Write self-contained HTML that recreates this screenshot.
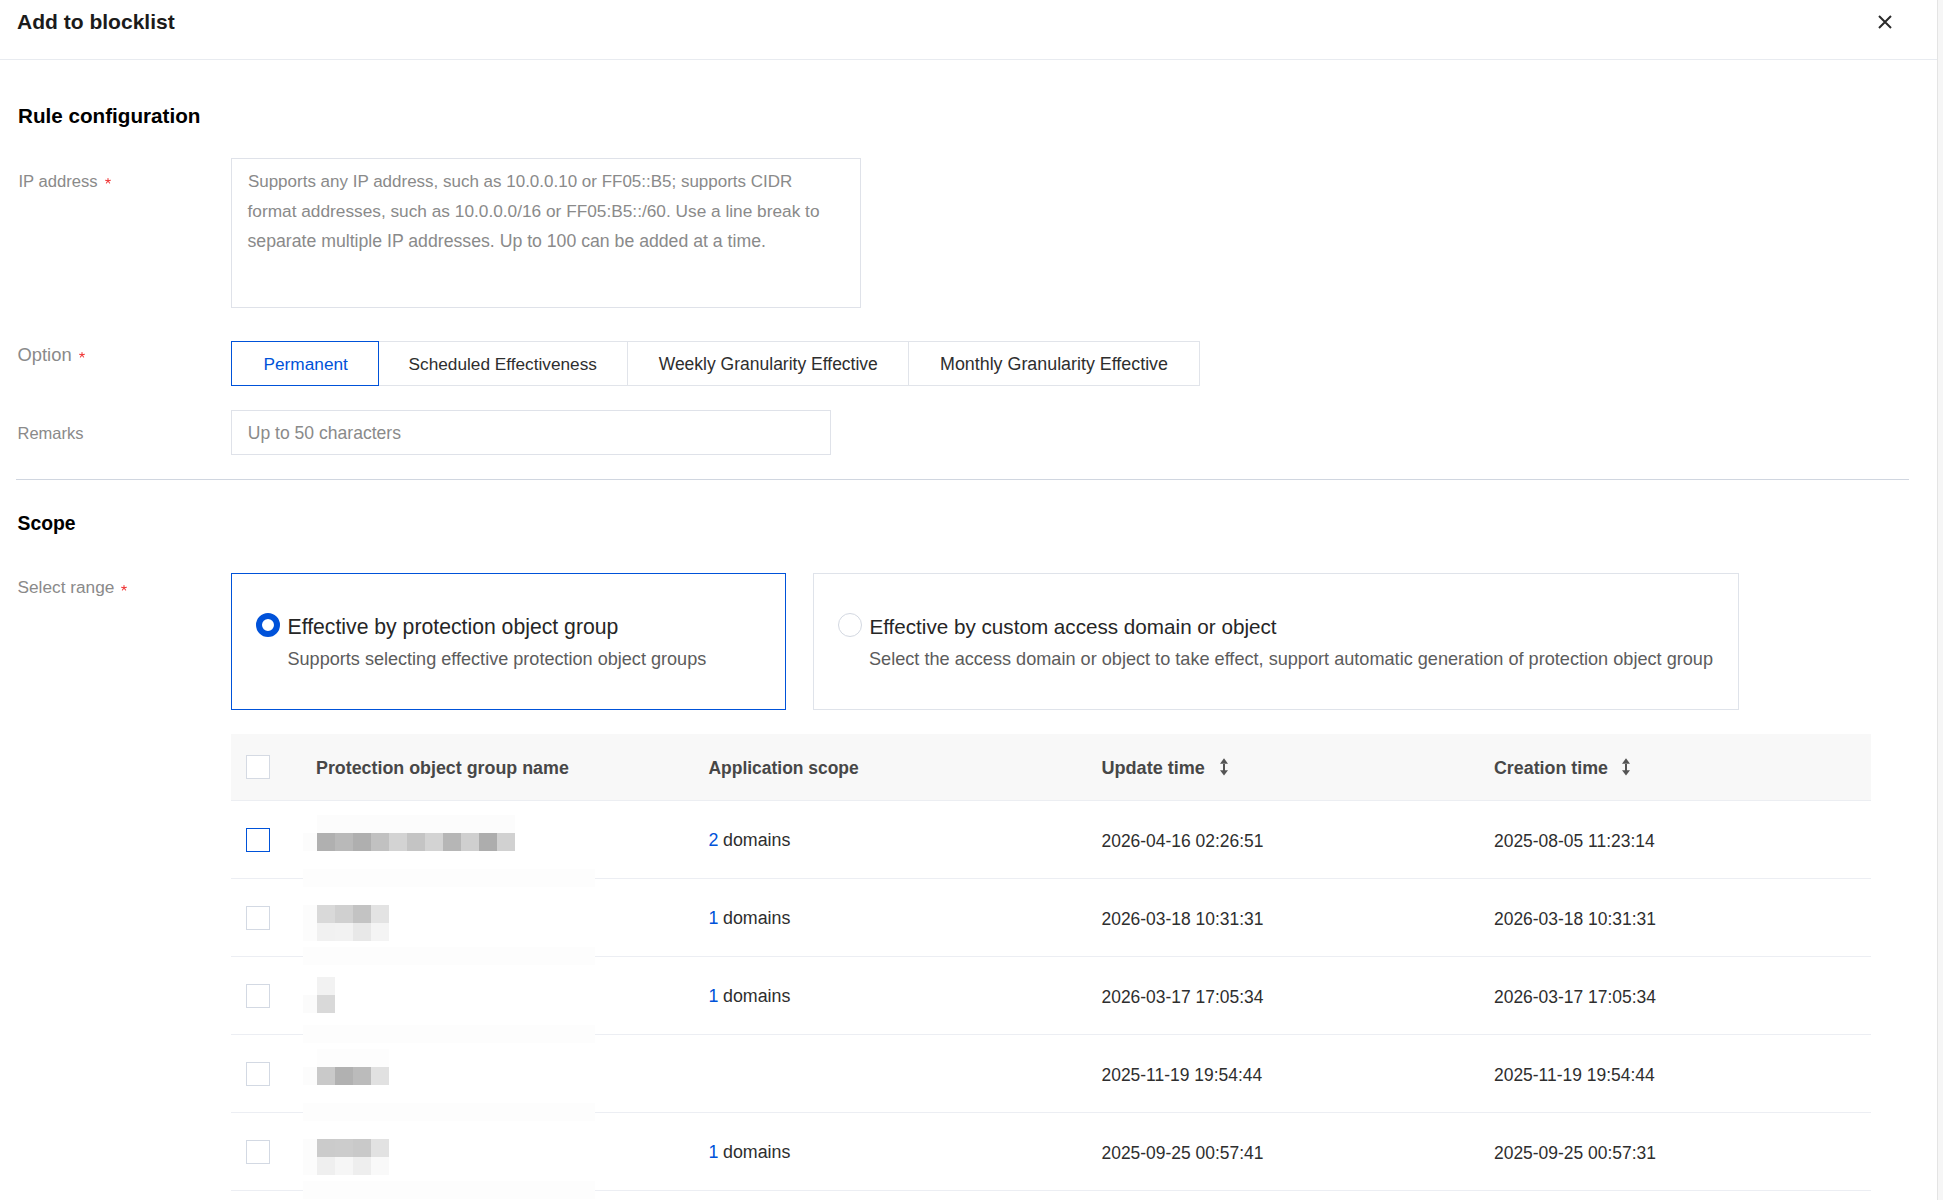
<!DOCTYPE html>
<html><head><meta charset="utf-8">
<style>
html,body{margin:0;padding:0;width:1943px;height:1200px;overflow:hidden;background:#fff;}
body{position:relative;font-family:"Liberation Sans",sans-serif;}
.a{position:absolute;box-sizing:border-box;}
.t{position:absolute;white-space:nowrap;line-height:1;}
.b{font-weight:bold;}
.m{display:inline-block;width:0;height:0;vertical-align:baseline;}
</style></head><body>

<svg class="a" style="left:1870px;top:8px" width="30" height="28" viewBox="1870 8 30 28"><path d="M1879 16 L1891 28 M1891 16 L1879 28" stroke="#2b2b2b" stroke-width="2" fill="none"/></svg>
<div class="a" style="left:0px;top:59px;width:1937px;height:1px;background:#e8ebf0"></div>
<div class="a" style="left:1937px;top:0px;width:6px;height:1200px;background:#f6f6f6;border-left:1px solid #e4e4e4"></div>
<div class="a" style="left:231px;top:158px;width:630px;height:150px;border:1px solid #dfe2e9"></div>
<div class="a" style="left:231px;top:341px;width:969px;height:45px;border:1px solid #e1e4ea"></div>
<div class="a" style="left:627px;top:341px;width:1px;height:45px;background:#e1e4ea"></div>
<div class="a" style="left:908px;top:341px;width:1px;height:45px;background:#e1e4ea"></div>
<div class="a" style="left:231px;top:341px;width:148px;height:45px;border:1px solid #0052d9"></div>
<div class="a" style="left:231px;top:410px;width:600px;height:45px;border:1px solid #dfe2e9"></div>
<div class="a" style="left:16px;top:479px;width:1893px;height:1px;background:#d0d6e0"></div>
<div class="a" style="left:231px;top:573px;width:555px;height:137px;border:1px solid #0052d9"></div>
<div class="a" style="left:256px;top:613px;width:24px;height:24px;border:6px solid #0052d9;border-radius:50%"></div>
<div class="a" style="left:813px;top:573px;width:926px;height:137px;border:1px solid #dfe3ea"></div>
<div class="a" style="left:838px;top:613px;width:24px;height:24px;border:1px solid #d3d8e1;border-radius:50%"></div>
<svg class="a" style="left:102.7px;top:176.4px" width="10" height="10" viewBox="-5 -5 10 10"><path d="M0 0 L0 -2.5 M0 0 L-2.4 -0.8 M0 0 L2.4 -0.8 M0 0 L-1.6 2.0 M0 0 L1.6 2.0" stroke="#f03c3c" stroke-width="1.1" stroke-linecap="round" fill="none"/></svg>
<svg class="a" style="left:77.1px;top:350.1px" width="10" height="10" viewBox="-5 -5 10 10"><path d="M0 0 L0 -2.5 M0 0 L-2.4 -0.8 M0 0 L2.4 -0.8 M0 0 L-1.6 2.0 M0 0 L1.6 2.0" stroke="#f03c3c" stroke-width="1.1" stroke-linecap="round" fill="none"/></svg>
<svg class="a" style="left:119.4px;top:582.5px" width="10" height="10" viewBox="-5 -5 10 10"><path d="M0 0 L0 -2.5 M0 0 L-2.4 -0.8 M0 0 L2.4 -0.8 M0 0 L-1.6 2.0 M0 0 L1.6 2.0" stroke="#f03c3c" stroke-width="1.1" stroke-linecap="round" fill="none"/></svg>
<div class="a" style="left:231px;top:734px;width:1640px;height:66px;background:#f8f8f8"></div>
<div class="a" style="left:231px;top:800px;width:1640px;height:1px;background:#eceef2"></div>
<div class="a" style="left:246px;top:755px;width:24px;height:24px;border:1px solid #d5dae3;background:#fff"></div>
<svg class="a" style="left:1219px;top:757px" width="10" height="20" viewBox="0 0 10 20"><path d="M5 1.2 L1 6.8 L9 6.8 Z M4 6.5 H6 V13.5 H4 Z M1 13.2 L9 13.2 L5 18.6 Z" fill="#555"/></svg>
<svg class="a" style="left:1621px;top:757px" width="10" height="20" viewBox="0 0 10 20"><path d="M5 1.2 L1 6.8 L9 6.8 Z M4 6.5 H6 V13.5 H4 Z M1 13.2 L9 13.2 L5 18.6 Z" fill="#555"/></svg>
<div class="a" style="left:231px;top:878px;width:1640px;height:1px;background:#eceef3"></div>
<div class="a" style="left:246px;top:828px;width:24px;height:24px;border:1px solid #0052d9;background:#fff"></div>
<div class="a" style="left:303px;top:869px;width:292px;height:18px;background:#fdfdfd"></div>
<div class="a" style="left:231px;top:956px;width:1640px;height:1px;background:#eceef3"></div>
<div class="a" style="left:246px;top:906px;width:24px;height:24px;border:1px solid #d3d9e3;background:#fff"></div>
<div class="a" style="left:303px;top:947px;width:292px;height:18px;background:#fdfdfd"></div>
<div class="a" style="left:231px;top:1034px;width:1640px;height:1px;background:#eceef3"></div>
<div class="a" style="left:246px;top:984px;width:24px;height:24px;border:1px solid #d3d9e3;background:#fff"></div>
<div class="a" style="left:303px;top:1025px;width:292px;height:18px;background:#fdfdfd"></div>
<div class="a" style="left:231px;top:1112px;width:1640px;height:1px;background:#eceef3"></div>
<div class="a" style="left:246px;top:1062px;width:24px;height:24px;border:1px solid #d3d9e3;background:#fff"></div>
<div class="a" style="left:303px;top:1103px;width:292px;height:18px;background:#fdfdfd"></div>
<div class="a" style="left:231px;top:1190px;width:1640px;height:1px;background:#eceef3"></div>
<div class="a" style="left:246px;top:1140px;width:24px;height:24px;border:1px solid #d3d9e3;background:#fff"></div>
<div class="a" style="left:303px;top:1181px;width:292px;height:18px;background:#fdfdfd"></div>
<div class="a" style="left:317px;top:815px;width:198px;height:18px;background:#fcfcfc"></div>
<div class="a" style="left:303px;top:833px;width:14px;height:18px;background:#fcfcfc"></div>
<div class="a" style="left:303px;top:905px;width:14px;height:36px;background:#fcfcfc"></div>
<div class="a" style="left:303px;top:995px;width:14px;height:18px;background:#fbfbfb"></div>
<div class="a" style="left:317px;top:1049px;width:72px;height:18px;background:#fdfdfd"></div>
<div class="a" style="left:303px;top:1067px;width:14px;height:18px;background:#fcfcfc"></div>
<div class="a" style="left:303px;top:1139px;width:14px;height:36px;background:#fcfcfc"></div>
<div class="a" style="left:317px;top:833px;width:18px;height:18px;background:#b0b0b0"></div>
<div class="a" style="left:335px;top:833px;width:18px;height:18px;background:#b9b9b9"></div>
<div class="a" style="left:353px;top:833px;width:18px;height:18px;background:#afafaf"></div>
<div class="a" style="left:371px;top:833px;width:18px;height:18px;background:#c1c1c1"></div>
<div class="a" style="left:389px;top:833px;width:18px;height:18px;background:#d3d3d3"></div>
<div class="a" style="left:407px;top:833px;width:18px;height:18px;background:#c4c4c4"></div>
<div class="a" style="left:425px;top:833px;width:18px;height:18px;background:#d3d3d3"></div>
<div class="a" style="left:443px;top:833px;width:18px;height:18px;background:#b6b6b6"></div>
<div class="a" style="left:461px;top:833px;width:18px;height:18px;background:#cfcfcf"></div>
<div class="a" style="left:479px;top:833px;width:18px;height:18px;background:#adadad"></div>
<div class="a" style="left:497px;top:833px;width:18px;height:18px;background:#d1d1d1"></div>
<div class="a" style="left:317px;top:905px;width:18px;height:18px;background:#d9d9d9"></div>
<div class="a" style="left:335px;top:905px;width:18px;height:18px;background:#d0d0d0"></div>
<div class="a" style="left:353px;top:905px;width:18px;height:18px;background:#c3c3c3"></div>
<div class="a" style="left:371px;top:905px;width:18px;height:18px;background:#e3e3e3"></div>
<div class="a" style="left:317px;top:923px;width:18px;height:18px;background:#f1f1f1"></div>
<div class="a" style="left:335px;top:923px;width:18px;height:18px;background:#f2f2f2"></div>
<div class="a" style="left:353px;top:923px;width:18px;height:18px;background:#e8e8e8"></div>
<div class="a" style="left:371px;top:923px;width:18px;height:18px;background:#f4f4f4"></div>
<div class="a" style="left:317px;top:977px;width:18px;height:18px;background:#f2f2f2"></div>
<div class="a" style="left:317px;top:995px;width:18px;height:18px;background:#d9d9d9"></div>
<div class="a" style="left:317px;top:1067px;width:18px;height:18px;background:#c9c9c9"></div>
<div class="a" style="left:335px;top:1067px;width:18px;height:18px;background:#b1b1b1"></div>
<div class="a" style="left:353px;top:1067px;width:18px;height:18px;background:#bbbbbb"></div>
<div class="a" style="left:371px;top:1067px;width:18px;height:18px;background:#e1e1e1"></div>
<div class="a" style="left:317px;top:1139px;width:18px;height:18px;background:#cbcbcb"></div>
<div class="a" style="left:335px;top:1139px;width:18px;height:18px;background:#cccccc"></div>
<div class="a" style="left:353px;top:1139px;width:18px;height:18px;background:#c9c9c9"></div>
<div class="a" style="left:371px;top:1139px;width:18px;height:18px;background:#e2e2e2"></div>
<div class="a" style="left:317px;top:1157px;width:18px;height:18px;background:#efefef"></div>
<div class="a" style="left:335px;top:1157px;width:18px;height:18px;background:#f6f6f6"></div>
<div class="a" style="left:353px;top:1157px;width:18px;height:18px;background:#eeeeee"></div>
<div class="a" style="left:371px;top:1157px;width:18px;height:18px;background:#f9f9f9"></div>
<div class="t b" style="left:17.0px;top:11px;font-size:21.04px;color:#1b1b1b;">Add to blocklist</div>
<div class="t b" style="left:18.0px;top:106px;font-size:20.679px;color:#000;">Rule configuration</div>
<div class="t" style="left:18.5px;top:174px;font-size:16.618px;color:#8a8a8a;">IP address</div>
<div class="t" style="left:247.9px;top:173px;font-size:16.993px;color:#8a8a8a;">Supports any IP address, such as 10.0.0.10 or FF05::B5; supports CIDR</div>
<div class="t" style="left:247.5px;top:203px;font-size:17.289px;color:#8a8a8a;">format addresses, such as 10.0.0.0/16 or FF05:B5::/60. Use a line break to</div>
<div class="t" style="left:247.5px;top:233px;font-size:17.685px;color:#8a8a8a;">separate multiple IP addresses. Up to 100 can be added at a time.</div>
<div class="t" style="left:17.5px;top:346px;font-size:18.37px;color:#8a8a8a;">Option</div>
<div class="t" style="left:263.5px;top:356px;font-size:17.26px;color:#0052d9;">Permanent</div>
<div class="t" style="left:408.6px;top:356px;font-size:17.229px;color:#2e2e2e;">Scheduled Effectiveness</div>
<div class="t" style="left:658.7px;top:356px;font-size:17.501px;color:#2e2e2e;">Weekly Granularity Effective</div>
<div class="t" style="left:940.0px;top:356px;font-size:17.877px;color:#2e2e2e;">Monthly Granularity Effective</div>
<div class="t" style="left:17.5px;top:425px;font-size:16.5px;color:#8a8a8a;">Remarks</div>
<div class="t" style="left:247.8px;top:425px;font-size:17.559px;color:#8a8a8a;">Up to 50 characters</div>
<div class="t b" style="left:17.5px;top:514px;font-size:19.367px;color:#000;">Scope</div>
<div class="t" style="left:17.5px;top:579px;font-size:17.257px;color:#8a8a8a;">Select range</div>
<div class="t" style="left:287.5px;top:616px;font-size:21.212px;color:#262626;">Effective by protection object group</div>
<div class="t" style="left:287.5px;top:650px;font-size:18.088px;color:#5c5c5c;">Supports selecting effective protection object groups</div>
<div class="t" style="left:869.4px;top:617px;font-size:20.675px;color:#262626;">Effective by custom access domain or object</div>
<div class="t" style="left:869.0px;top:650px;font-size:18.141px;color:#5c5c5c;">Select the access domain or object to take effect, support automatic generation of protection object group</div>
<div class="t b" style="left:316.0px;top:760px;font-size:17.855px;color:#474747;">Protection object group name</div>
<div class="t b" style="left:708.5px;top:760px;font-size:17.446px;color:#474747;">Application scope</div>
<div class="t b" style="left:1101.5px;top:759px;font-size:18.079px;color:#474747;">Update time</div>
<div class="t b" style="left:1494.0px;top:760px;font-size:17.84px;color:#474747;">Creation time</div>
<div class="t" style="left:708.5px;top:832px;font-size:17.831px;color:#0052d9;">2</div>
<div class="t" style="left:723.0px;top:832px;font-size:17.831px;color:#2e2e2e;">domains</div>
<div class="t" style="left:1101.5px;top:833px;font-size:17.446px;color:#2e2e2e;">2026-04-16 02:26:51</div>
<div class="t" style="left:1494.0px;top:833px;font-size:17.446px;color:#2e2e2e;">2025-08-05 11:23:14</div>
<div class="t" style="left:708.5px;top:910px;font-size:17.831px;color:#0052d9;">1</div>
<div class="t" style="left:723.0px;top:910px;font-size:17.831px;color:#2e2e2e;">domains</div>
<div class="t" style="left:1101.5px;top:911px;font-size:17.446px;color:#2e2e2e;">2026-03-18 10:31:31</div>
<div class="t" style="left:1494.0px;top:911px;font-size:17.446px;color:#2e2e2e;">2026-03-18 10:31:31</div>
<div class="t" style="left:708.5px;top:988px;font-size:17.831px;color:#0052d9;">1</div>
<div class="t" style="left:723.0px;top:988px;font-size:17.831px;color:#2e2e2e;">domains</div>
<div class="t" style="left:1101.5px;top:989px;font-size:17.446px;color:#2e2e2e;">2026-03-17 17:05:34</div>
<div class="t" style="left:1494.0px;top:989px;font-size:17.446px;color:#2e2e2e;">2026-03-17 17:05:34</div>
<div class="t" style="left:1101.5px;top:1067px;font-size:17.446px;color:#2e2e2e;">2025-11-19 19:54:44</div>
<div class="t" style="left:1494.0px;top:1067px;font-size:17.446px;color:#2e2e2e;">2025-11-19 19:54:44</div>
<div class="t" style="left:708.5px;top:1144px;font-size:17.831px;color:#0052d9;">1</div>
<div class="t" style="left:723.0px;top:1144px;font-size:17.831px;color:#2e2e2e;">domains</div>
<div class="t" style="left:1101.5px;top:1145px;font-size:17.446px;color:#2e2e2e;">2025-09-25 00:57:41</div>
<div class="t" style="left:1494.0px;top:1145px;font-size:17.446px;color:#2e2e2e;">2025-09-25 00:57:31</div>
</body></html>
